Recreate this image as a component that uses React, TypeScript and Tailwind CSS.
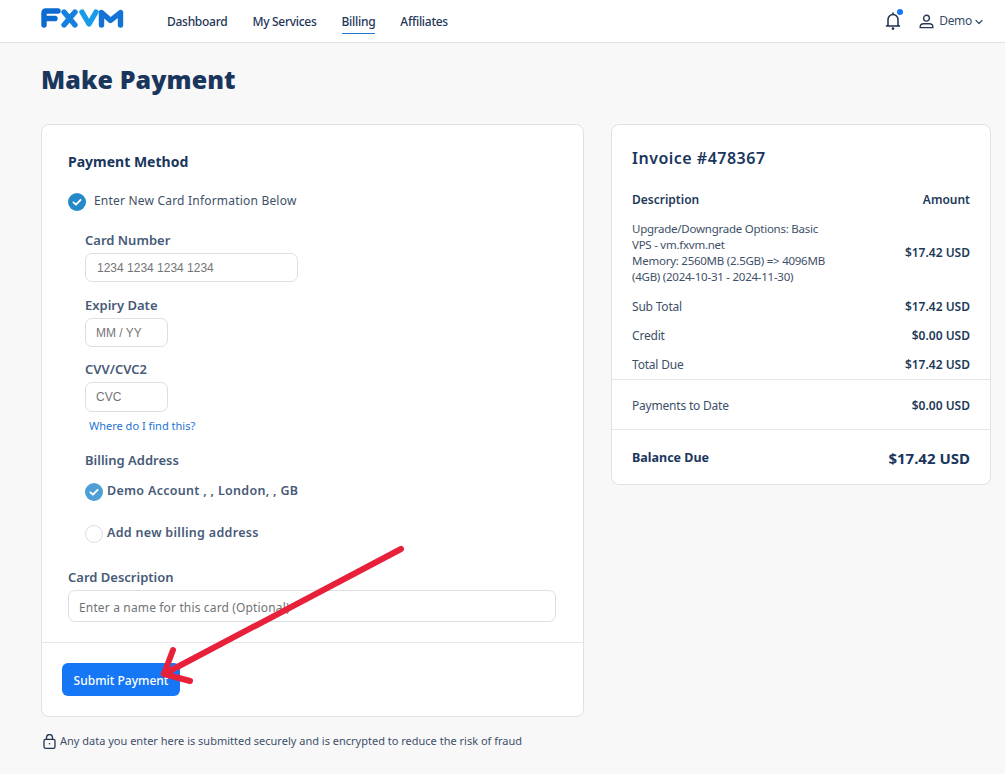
import React from "react";

function Logo() {
  return (
    <svg width="84" height="20" viewBox="0 0 84 20" fill="none" strokeLinecap="round" strokeLinejoin="round" strokeWidth="5.4">
      <path d="M3 17V5Q3 3 5 3H17M3 10.5H14" stroke="#0d6bcf" />
      <path d="M23 4L34 17M34 4L23 17" stroke="#1580de" />
      <path d="M41 4L48 16L55 4" stroke="#1a9be8" />
      <path d="M60.5 17V4.5L69.5 12.5L79.5 4.5V17" stroke="#1272d6" />
    </svg>
  );
}

function Check({ color, size = 18 }: { color: string; size?: number }) {
  return (
    <svg width={size} height={size} viewBox="0 0 18 18" className="shrink-0">
      <circle cx="9" cy="9" r="9" fill={color} />
      <path d="M5.4 9.3L8 11.7L12.6 6.8" fill="none" stroke="#fff" strokeWidth="1.8" strokeLinecap="round" strokeLinejoin="round" />
    </svg>
  );
}

function Row({ label, value }: { label: string; value: string }) {
  return (
    <div className="flex h-[29px] items-center justify-between text-[12px]">
      <span className="tracking-[-0.2px] text-[#3e5068]">{label}</span>
      <span className="font-semibold text-[#1d3a58]">{value}</span>
    </div>
  );
}

export default function App() {
  return (
    <div className="relative h-[774px] w-[1005px] overflow-hidden bg-[#f8f8f9] font-['Noto_Sans',sans-serif]">
      <header className="flex h-[43px] items-center border-b border-[#dfe3e8] bg-white pl-[41px] pr-[22px]">
        <div className="mb-[6px] flex w-[126px] shrink-0"><Logo /></div>
        <nav className="flex h-full items-center gap-[25px] pt-[1px] text-[12px] font-medium tracking-[-0.28px] text-[#1e3557]">
          <a>Dashboard</a>
          <a>My Services</a>
          <a className="relative flex h-full items-center">
            Billing
            <span className="absolute bottom-[8px] left-0 right-0 h-[1px] bg-[#1f78d1]" />
          </a>
          <a>Affiliates</a>
        </nav>
        <div className="ml-auto flex items-center text-[#26395a]">
          <span className="relative mr-[18px] flex">
            <svg width="16" height="18" viewBox="0 0 16 18" fill="none" stroke="#1e2f4d" strokeWidth="1.5" strokeLinecap="round" strokeLinejoin="round">
              <path d="M3 13V7.5a5 5 0 0 1 10 0V13l1.5 1h-13z" />
              <path d="M8 1v1.4" />
              <circle cx="8" cy="16.6" r="0.6" fill="#1e2f4d" />
            </svg>
            <span className="absolute right-[-2px] top-[-3px] h-[6px] w-[6px] rounded-full bg-[#1577f0]" />
          </span>
          <svg width="15" height="15" viewBox="0 0 15 15" fill="none" stroke="#26395a" strokeWidth="1.4" strokeLinecap="round" className="mr-[5px]">
            <circle cx="7.5" cy="4.2" r="2.9" />
            <path d="M1.2 13.6v-.9c0-1.8 1.6-3 3.4-3h5.8c1.8 0 3.4 1.2 3.4 3v.9z" />
          </svg>
          <span className="text-[12px] tracking-[-0.3px] text-[#3a4b66]">Demo</span>
          <svg width="8" height="6" viewBox="0 0 8 6" fill="none" stroke="#3a4b66" strokeWidth="1.2" strokeLinecap="round" strokeLinejoin="round" className="ml-[3px] mt-[2px]">
            <path d="M1 1.5L4 4.5L7 1.5" />
          </svg>
        </div>
      </header>

      <main className="px-[41px]">
        <h1 className="mt-[16px] h-[40px] text-[25px] font-black leading-[40px] tracking-[0.1px] text-[#1a365d]">Make Payment</h1>
        <div className="mt-[25px] flex items-start gap-[27px]">
          <div className="w-[543px] shrink-0">
            <section className="h-[593px] rounded-[8px] border border-[#dfe1e5] bg-white">
              <div className="h-[517px] pl-[26px] pr-[27px] pt-[27px]">
                <h2 className="h-[20px] text-[14px] font-bold leading-[20px] text-[#1a365d]">Payment Method</h2>
                <div className="mt-[21px] flex h-[18px] items-center">
                  <Check color="#2389c9" />
                  <span className="ml-[8px] -translate-y-[1px] text-[12px] tracking-[0.2px] text-[#3e5068]">Enter New Card Information Below</span>
                </div>
                <div className="ml-[17px]">
                  <label className="mt-[21px] block h-[18px] text-[13px] font-semibold leading-[16px] text-[#475a78]">Card Number</label>
                  <div className="mt-[3px] flex h-[29px] w-[213px] items-center rounded-[7px] border border-[#dcdfe3] pl-[11px] font-['Liberation_Sans',sans-serif] text-[12px] text-[#757575]">1234 1234 1234 1234</div>
                  <label className="mt-[15px] block h-[18px] text-[13px] font-semibold leading-[16px] text-[#475a78]">Expiry Date</label>
                  <div className="mt-[3px] flex h-[29px] w-[83px] items-center rounded-[7px] border border-[#dcdfe3] pl-[10px] font-['Liberation_Sans',sans-serif] text-[12px] text-[#757575]">MM / YY</div>
                  <label className="mt-[14px] block h-[18px] text-[13px] font-semibold leading-[16px] text-[#475a78]">CVV/CVC2</label>
                  <div className="mt-[3px] flex h-[30px] w-[83px] items-center rounded-[7px] border border-[#dcdfe3] pl-[10px] font-['Liberation_Sans',sans-serif] text-[12px] text-[#757575]">CVC</div>
                  <a className="ml-[4px] mt-[5px] block h-[17px] text-[11px] leading-[17px] text-[#1c74d4]">Where do I find this?</a>
                  <label className="mt-[18px] block h-[18px] text-[13px] font-semibold leading-[16px] text-[#475a78]">Billing Address</label>
                  <div className="mt-[13px] flex h-[18px] items-center">
                    <Check color="#4d9fd6" />
                    <span className="ml-[4px] -translate-y-[1px] text-[12.5px] font-semibold tracking-[0.3px] text-[#475a78]">Demo Account , , London, , GB</span>
                  </div>
                  <div className="mt-[24px] flex h-[18px] items-center">
                    <span className="h-[18px] w-[18px] shrink-0 rounded-full border border-[#dcdfe3] bg-white" />
                    <span className="ml-[4px] -translate-y-[1px] text-[12.5px] font-semibold tracking-[0.3px] text-[#475a78]">Add new billing address</span>
                  </div>
                </div>
                <label className="mt-[26px] block h-[18px] text-[13px] font-semibold leading-[16px] text-[#475a78]">Card Description</label>
                <div className="mt-[3px] flex h-[32px] items-center rounded-[7px] border border-[#dcdfe3] pl-[10px] pt-[3px] text-[12px] tracking-[0.15px] text-[#6f7478]">Enter a name for this card (Optional)</div>
              </div>
              <div className="border-t border-[#e6e8eb] pl-[20px] pt-[20px]">
                <button className="h-[33px] w-[118px] rounded-[6px] bg-[#1577f5] pt-[2px] text-[12px] font-medium text-white">Submit Payment</button>
              </div>
            </section>
            <div className="ml-[2px] mt-[16px] flex items-center text-[11px] text-[#3e5068]">
              <svg width="13" height="15" viewBox="0 0 13 15" fill="none" stroke="#22344f" strokeWidth="1.3" className="mr-[4px]">
                <rect x="1" y="5.3" width="11" height="9" rx="1.6" />
                <path d="M3.5 5.3V3.6a3 3 0 0 1 6 0v1.7" />
                <circle cx="6.5" cy="9.8" r="0.8" fill="#22344f" stroke="none" />
              </svg>
              Any data you enter here is submitted securely and is encrypted to reduce the risk of fraud
            </div>
          </div>

          <aside className="h-[361px] w-[380px] shrink-0 rounded-[8px] border border-[#dfe1e5] bg-white">
            <div className="pl-[20px] pr-[20px] pt-[21px]">
              <h2 className="h-[24px] text-[16px] font-semibold leading-[24px] tracking-[0.5px] text-[#1a365d]">Invoice #478367</h2>
              <div className="mt-[21px] flex h-[18px] items-center justify-between text-[12px] font-semibold text-[#1d3a58]">
                <span>Description</span>
                <span>Amount</span>
              </div>
              <div className="mt-[12px] flex items-center justify-between text-[12px]">
                <span className="w-[200px] text-[11.5px] leading-[16px] tracking-[-0.25px] text-[#3e5068]">
                  Upgrade/Downgrade Options: Basic<br />VPS - vm.fxvm.net<br />Memory: 2560MB (2.5GB) =&gt; 4096MB<br />(4GB) (2024-10-31 - 2024-11-30)
                </span>
                <span className="font-semibold text-[#1d3a58]">$17.42 USD</span>
              </div>
              <div className="mt-[7px]">
                <Row label="Sub Total" value="$17.42 USD" />
                <Row label="Credit" value="$0.00 USD" />
                <Row label="Total Due" value="$17.42 USD" />
              </div>
            </div>
            <div className="h-[50px] border-t border-[#e6e8eb] px-[20px] pt-[11px]">
              <Row label="Payments to Date" value="$0.00 USD" />
            </div>
            <div className="flex h-[55px] items-center justify-between border-t border-[#e6e8eb] px-[20px] pt-[2px] font-bold text-[#1a365d]">
              <span className="text-[12.5px]">Balance Due</span>
              <span className="text-[15px]">$17.42 USD</span>
            </div>
          </aside>
        </div>
      </main>

      <svg className="pointer-events-none absolute left-0 top-0" width="1005" height="774" viewBox="0 0 1005 774" fill="none" stroke="#e8213b" strokeWidth="6" strokeLinecap="round" strokeLinejoin="round">
        <path d="M401 549L164 674" />
        <path d="M173 650L164 674L190 681" />
      </svg>
    </div>
  );
}
